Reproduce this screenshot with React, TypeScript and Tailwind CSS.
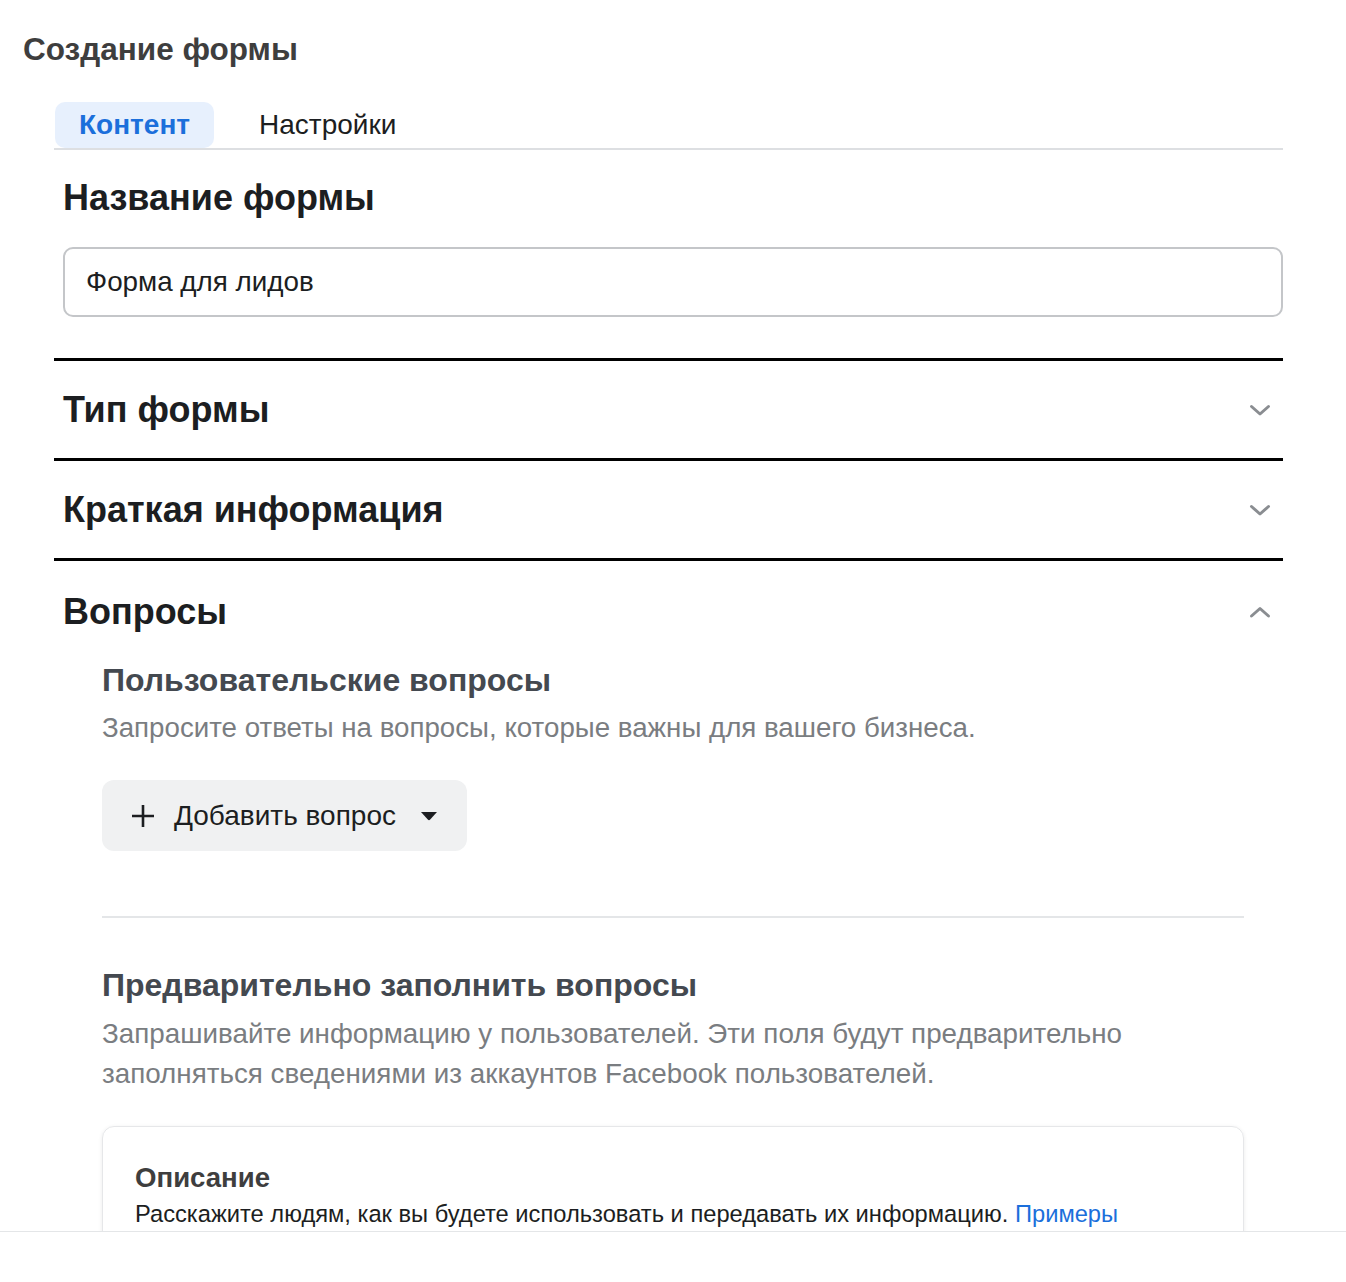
import React from "react";

const font = { fontFamily: '"Liberation Sans", Arial, sans-serif' };

function Chevron({ up = false }: { up?: boolean }) {
  return (
    <svg width="24" height="24" viewBox="0 0 24 24" className="mr-[11px]">
      <path
        d={up ? "M3.5 16 L12 8.5 L20.5 16" : "M3.5 8.5 L12 16 L20.5 8.5"}
        fill="none"
        stroke="#8a8d91"
        strokeWidth="3"
        strokeLinecap="round"
        strokeLinejoin="round"
      />
    </svg>
  );
}

function SectionRow({ title }: { title: string }) {
  return (
    <div className="border-t-[3px] border-black h-[100px] flex items-center justify-between pl-[9px]">
      <span className="text-[36px] leading-[40px] font-bold text-[#1c1e21]">{title}</span>
      <Chevron />
    </div>
  );
}

export default function App() {
  return (
    <div className="bg-white h-[1282px] overflow-hidden" style={font}>
      <div className="h-[1231px] overflow-hidden">
        {/* Header */}
        <h1 className="pl-[23px] pt-[32px] text-[31.5px] leading-[34px] font-bold text-[#3e3e3e]">
          Создание формы
        </h1>

        <div className="ml-[54px] w-[1229px]">
          {/* Tabs */}
          <div className="mt-[36px] flex items-stretch h-[48px] border-b-2 border-[#dddfe2]">
            <div className="ml-[1px] h-[46px] px-[24px] flex items-center rounded-[10px] bg-[#e7f0fd] text-[#1b6fdb] text-[28px] font-bold">
              Контент
            </div>
            <div className="h-[46px] ml-[21px] px-[24px] flex items-center text-[28px] text-[#1c1e21]">
              Настройки
            </div>
          </div>

          {/* Form name */}
          <div className="pl-[9px]">
            <h2 className="pt-[28px] text-[36px] leading-[40px] font-bold text-[#1c1e21]">
              Название формы
            </h2>
            <div className="mt-[29px] h-[70px] rounded-[10px] border-2 border-[#c4c6c9] flex items-center px-[21px] text-[27.8px] text-[#1c1e21]">
              Форма для лидов
            </div>
          </div>

          <div className="mt-[41px]">
            <SectionRow title="Тип формы" />
            <SectionRow title="Краткая информация" />
          </div>

          {/* Questions */}
          <div className="border-t-[3px] border-black">
            <div className="pt-[31px] flex items-center justify-between pl-[9px]">
              <span className="text-[36px] leading-[40px] font-bold text-[#1c1e21]">Вопросы</span>
              <Chevron up />
            </div>

            <div className="ml-[48px] w-[1142px]">
              <h3 className="mt-[30px] text-[32px] leading-[36px] font-bold text-[#444950]">
                Пользовательские вопросы
              </h3>
              <p className="mt-[14px] text-[27.7px] leading-[32px] text-[#7a7d81]">
                Запросите ответы на вопросы, которые важны для вашего бизнеса.
              </p>
              <button className="mt-[36px] h-[71px] rounded-[12px] bg-[#f0f1f2] flex items-center pl-[28px] pr-[29px] text-[28px] text-[#1c1e21]">
                <svg width="26" height="26" viewBox="0 0 26 26" className="mr-[18px]">
                  <path d="M13 2 V24 M2 13 H24" stroke="#1c1e21" strokeWidth="2.6" />
                </svg>
                Добавить вопрос
                <svg width="18" height="10" viewBox="0 0 18 10" className="ml-[24px]">
                  <path d="M1 1 H17 L10.2 8.6 Q9 9.8 7.8 8.6 Z" fill="#1c1e21" />
                </svg>
              </button>

              <div className="mt-[65px] border-t-2 border-[#e4e6e8]" />

              <h3 className="mt-[49px] text-[32px] leading-[36px] font-bold text-[#444950]">
                Предварительно заполнить вопросы
              </h3>
              <p className="mt-[11px] text-[27.8px] leading-[40px] text-[#7a7d81]">
                Запрашивайте информацию у пользователей. Эти поля будут предварительно
                <br />
                заполняться сведениями из аккаунтов Facebook пользователей.
              </p>

              <div className="mt-[32px] rounded-[12px] border border-[#e6e7e9] shadow-[0_1px_4px_rgba(0,0,0,0.08)] pt-[36px] pb-[40px] px-[32px]">
                <h4 className="text-[27.6px] leading-[30px] font-bold text-[#3e3e3e]">Описание</h4>
                <p className="mt-[7px] text-[23.7px] leading-[28px] text-[#1c1e21]">
                  Расскажите людям, как вы будете использовать и передавать их информацию.{" "}
                  <span className="text-[#1b6fdb]">Примеры</span>
                </p>
              </div>
            </div>
          </div>
        </div>
      </div>
      <div className="h-[51px] border-t border-[#e4e6e8] bg-white" />
    </div>
  );
}
